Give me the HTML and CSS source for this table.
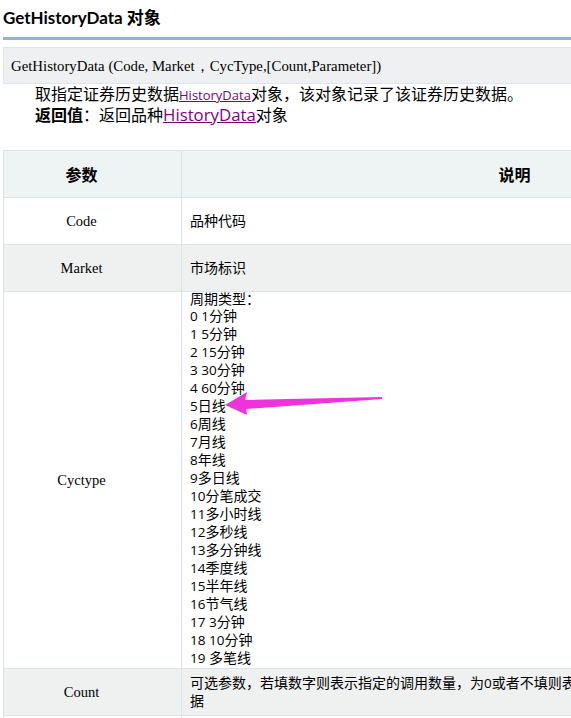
FILE: index.html
```html
<!DOCTYPE html>
<html lang="zh">
<head>
<meta charset="utf-8">
<link rel="stylesheet" href="styles.css">
</head>
<body>
<div class="page">
  <h2 class="title">GetHistoryData 对象</h2>
  <div class="sig">GetHistoryData (Code, Market，CycType,[Count,Parameter])</div>
  <div class="desc">
    <p>取指定证券历史数据<a class="link small" href="#">HistoryData</a>对象，该对象记录了该证券历史数据。</p>
    <p><b>返回值</b>：返回品种<a class="link big" href="#">HistoryData</a>对象</p>
  </div>
  <table class="params">
    <colgroup><col class="c1"><col class="c2"></colgroup>
    <tr class="head"><th class="hname">参数</th><th>说明</th></tr>
    <tr class="row"><td class="name">Code</td><td class="text">品种代码</td></tr>
    <tr class="row alt"><td class="name">Market</td><td class="text">市场标识</td></tr>
    <tr class="row"><td class="name">Cyctype</td><td class="text list-cell">
      <div class="list">
        <div class="first">周期类型：</div>
        <div><span class="n">0 1</span>分钟</div>
        <div><span class="n">1 5</span>分钟</div>
        <div><span class="n">2 15</span>分钟</div>
        <div><span class="n">3 30</span>分钟</div>
        <div><span class="n">4 60</span>分钟</div>
        <div><span class="n">5</span>日线</div>
        <div><span class="n">6</span>周线</div>
        <div><span class="n">7</span>月线</div>
        <div><span class="n">8</span>年线</div>
        <div><span class="n">9</span>多日线</div>
        <div><span class="n">10</span>分笔成交</div>
        <div><span class="n">11</span>多小时线</div>
        <div><span class="n">12</span>多秒线</div>
        <div><span class="n">13</span>多分钟线</div>
        <div><span class="n">14</span>季度线</div>
        <div><span class="n">15</span>半年线</div>
        <div><span class="n">16</span>节气线</div>
        <div><span class="n">17 3</span>分钟</div>
        <div><span class="n">18 10</span>分钟</div>
        <div><span class="n">19 </span>多笔线</div>
      </div>
    </td></tr>
    <tr class="row alt"><td class="name">Count</td><td class="text wrap"><div class="wline">可选参数，若填数字则表示指定的调用数量，为<span class="n">0</span>或者不填则表示调用全部历史数</div><div class="wline">据</div></td></tr>
    <tr class="row"><td class="name">Parameter</td><td class="text">可选参数</td></tr>
  </table>
  <svg class="arrow" width="571" height="718" viewBox="0 0 571 718">
    <polygon points="225,405 247,392 245,400 382,397 382,399 246,409 247,415" fill="#ee33dd"/>
  </svg>
</div>
</body>
</html>
```
FILE: styles.css
```css
html, body {
  margin: 0;
  padding: 0;
  overflow: hidden;
  background: #fff;
}
.page {
  position: relative;
  width: 860px;
  padding: 0 0 0 3px;
  font-family: "Noto Sans CJK SC", sans-serif;
  color: #000;
}
.title {
  margin: 0;
  padding: 7px 0 0 0;
  height: 40px;
  box-sizing: border-box;
  font-family: "Lato", "Noto Sans CJK SC", sans-serif;
  font-size: 17px;
  font-weight: bold;
  line-height: 22px;
  border-bottom: 3px solid #95b3d7;
}
.sig {
  margin-top: 7px;
  height: 37px;
  box-sizing: border-box;
  background: #eef0f1;
  border: 1px solid #dde5ef;
  padding: 0 0 0 7px;
  font-family: "Liberation Serif", serif;
  font-size: 14.8px;
  line-height: 36px;
}
.desc {
  padding-left: 32px;
  font-size: 16px;
  line-height: 21px;
}
.desc p {
  margin: 0;
  height: 21px;
}
.desc p:first-child { margin-top: -1px; }
.link {
  color: #800080;
  text-decoration: underline;
  font-family: "Open Sans", sans-serif;
  line-height: 1;
}
.link.small { font-size: 13px; }
.link.big { font-size: 16.8px; }
.params {
  margin-top: 25px;
  border-collapse: collapse;
  width: 845px;
  table-layout: fixed;
}
.c1 { width: 178px; }
.params th, .params td {
  border: 1px solid #dae3ec;
  padding: 0;
}
.head { background: #eef3f3; height: 47px; }
.head th {
  font-size: 16px;
  font-weight: bold;
  text-align: center;
}
.params .hname { padding-right: 22px; }
.row { height: 47px; }
.alt { background: #eff0f0; }
.params .name {
  text-align: center;
  font-family: "Liberation Serif", serif;
  font-size: 14.5px;
  padding-right: 22px;
}
.params .text {
  padding-left: 8px;
  padding-bottom: 3px;
  font-size: 14px;
  line-height: 18px;
}
.params .list-cell { vertical-align: middle; padding-bottom: 0; }
.list {
  margin: -2px 0 2px 0;
  line-height: 18px;
}
.list > div,
.wline {
  height: 18px;
  white-space: nowrap;
}
.list > .first {
  height: 16px;
  line-height: 16px;
}
.n {
  font-family: "Open Sans", sans-serif;
  font-size: 13.5px;
  line-height: 1;
}
.wrap { vertical-align: middle; }
.arrow {
  position: absolute;
  left: 0;
  top: 0;
  pointer-events: none;
}
```
